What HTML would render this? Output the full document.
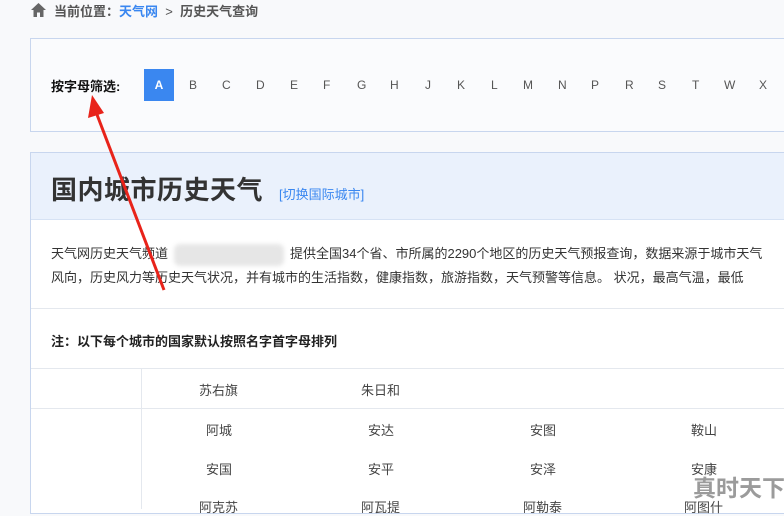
<!DOCTYPE html><html><head><meta charset="utf-8"><style>
body{margin:0;width:784px;height:503px;overflow:hidden;background:#f8f9fb;font-family:"Liberation Sans","Noto Sans CJK SC",sans-serif;position:relative;color:#333}
.a{position:absolute;white-space:nowrap}
</style></head><body>
<svg class="a" style="left:30px;top:2px" width="17" height="16" viewBox="0 0 17 16"><path d="M8.5 1 L16 8 H13.5 V15 H10 V10.5 H7 V15 H3.5 V8 H1 Z" fill="#666"/></svg>
<div class="a" style="left:54px;top:1px;font-size:13px;color:#555;font-weight:bold">当前位置：<span style="color:#3a87f0">天气网</span>&nbsp;&nbsp;<span style="font-weight:normal">&gt;</span>&nbsp;&nbsp;历史天气查询</div>
<div class="a" style="left:30px;top:38px;width:760px;height:92px;border:1px solid #c8d6ee;background:#fafbfd"></div>
<div class="a" style="left:51px;top:76px;font-size:13px;font-weight:bold;color:#111">按字母筛选:</div>
<div class="a" style="left:144px;top:69px;width:30px;height:32px;background:#3a87f0;color:#fff;font-size:12px;font-weight:bold;line-height:32px;text-align:center">A</div>
<div class="a" style="top:78px;font-size:12px;color:#555;left:0;width:784px">
<span class="a" style="left:189px">B</span><span class="a" style="left:222px">C</span><span class="a" style="left:256px">D</span><span class="a" style="left:290px">E</span><span class="a" style="left:323px">F</span><span class="a" style="left:357px">G</span><span class="a" style="left:390px">H</span><span class="a" style="left:425px">J</span><span class="a" style="left:457px">K</span><span class="a" style="left:491px">L</span><span class="a" style="left:523px">M</span><span class="a" style="left:558px">N</span><span class="a" style="left:591px">P</span><span class="a" style="left:625px">R</span><span class="a" style="left:658px">S</span><span class="a" style="left:692px">T</span><span class="a" style="left:724px">W</span><span class="a" style="left:759px">X</span></div>
<div class="a" style="left:30px;top:152px;width:760px;height:360px;border:1px solid #c8d6ee;background:#fff"></div>
<div class="a" style="left:31px;top:153px;width:760px;height:66px;background:#eaf1fc;border-bottom:1px solid #d6e2f4"></div>
<div class="a" style="left:51px;top:170px;font-size:26px;font-weight:bold;color:#333;letter-spacing:0.5px">国内城市历史天气</div>
<div class="a" style="left:279px;top:184px;font-size:13px;color:#3a87f0">[切换国际城市]</div>
<div class="a" style="left:51px;top:242px;font-size:13px;color:#333;line-height:24px">天气网历史天气频道<span style="display:inline-block;width:110px;height:22px;background:#e6e6e6;border-radius:6px;vertical-align:middle;margin:0 6px;filter:blur(2px)"></span>提供全国34个省、市所属的2290个地区的历史天气预报查询，数据来源于城市天气<br>风向，历史风力等历史天气状况，并有城市的生活指数，健康指数，旅游指数，天气预警等信息。 状况，最高气温，最低</div>
<div class="a" style="left:31px;top:308px;width:760px;height:1px;background:#e4e8ee"></div>
<div class="a" style="left:51px;top:331px;font-size:13px;font-weight:bold;color:#222">注：以下每个城市的国家默认按照名字首字母排列</div>
<div class="a" style="left:31px;top:368px;width:760px;height:1px;background:#e4e8ee"></div>
<div class="a" style="left:31px;top:408px;width:760px;height:1px;background:#e4e8ee"></div>
<div class="a" style="left:141px;top:369px;width:1px;height:140px;background:#e4e8ee"></div>
<div class="a" style="top:380px;left:0;font-size:13px;color:#444">
<span class="a" style="left:199px">苏右旗</span><span class="a" style="left:361px">朱日和</span></div>
<div class="a" style="top:420px;left:0;font-size:13px;color:#444">
<span class="a" style="left:206px">阿城</span><span class="a" style="left:368px">安达</span><span class="a" style="left:530px">安图</span><span class="a" style="left:691px">鞍山</span></div>
<div class="a" style="top:459px;left:0;font-size:13px;color:#444">
<span class="a" style="left:206px">安国</span><span class="a" style="left:368px">安平</span><span class="a" style="left:530px">安泽</span><span class="a" style="left:691px">安康</span></div>
<div class="a" style="top:497px;left:0;font-size:13px;color:#444">
<span class="a" style="left:199px">阿克苏</span><span class="a" style="left:361px">阿瓦提</span><span class="a" style="left:523px">阿勒泰</span><span class="a" style="left:684px">阿图什</span></div>
<div class="a" style="left:693px;top:469px;font-size:23px;font-weight:bold;color:#8a8a8a;opacity:.85">真时天下</div>
<svg class="a" style="left:0;top:0" width="784" height="503"><path d="M164 290 L96 112" stroke="#e8231a" stroke-width="3"/><path d="M92 95 L88 118 L104 113 Z" fill="#e8231a"/></svg>
</body></html>
